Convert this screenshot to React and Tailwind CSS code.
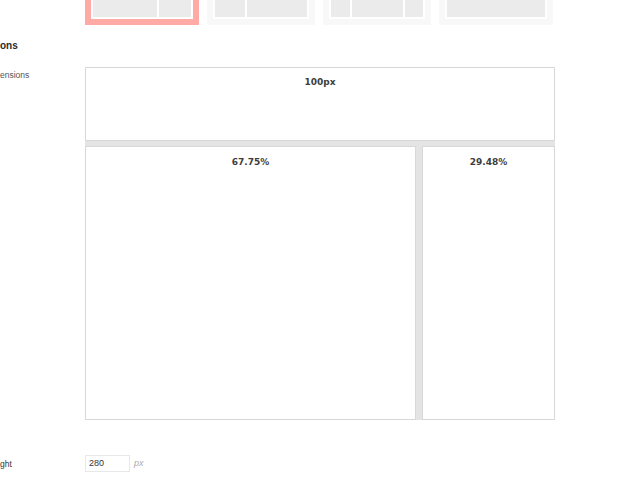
import React from "react";

function Thumb({ selected, cols, width }) {
  return (
    <div
      className={
        "shrink-0 border-[6px] p-[2px] bg-white " +
        (selected ? "border-[#ffaaa5]" : "border-[#f8f8f8]")
      }
      style={{ width }}
    >
      <div className="flex gap-[2px] h-[37px]">
        {cols.map((c, i) => (
          <div key={i} className="bg-[#ebebeb]" style={{ flexGrow: c, flexBasis: 0 }} />
        ))}
      </div>
    </div>
  );
}

export default function App() {
  return (
    <div
      className="w-[619px] h-[480px] overflow-hidden bg-white relative"
      style={{ fontFamily: '"Liberation Sans", Arial, sans-serif' }}
    >
      {/* template thumbnails */}
      <div className="flex gap-2 pl-[85px] -mt-[28px]">
        <Thumb selected cols={[63, 32]} width={114} />
        <Thumb cols={[31, 63]} width={108} />
        <Thumb cols={[20, 53, 19]} width={108} />
        <Thumb cols={[1]} width={114} />
      </div>

      {/* section heading */}
      <div className="mt-[15px] text-[10px] font-bold text-[#2a2a2a] leading-[12px]">ons</div>

      {/* column dimensions */}
      <div className="flex mt-[15px]">
        <div className="w-[85px] shrink-0 pt-[3px] text-[8.5px] text-[#555] leading-[10px]">ensions</div>
        <div className="w-[470px] flex flex-col">
          <div
            className="h-[74px] border border-[#d8d8d8] flex justify-center pt-[9px] text-[9px] font-bold text-[#3d3d3d] leading-[11px]"
            style={{ fontFamily: '"DejaVu Sans", Verdana, sans-serif' }}
          >
            100px
          </div>
          <div className="h-[5px] bg-[#e4e4e4]" />
          <div className="flex h-[274px]">
            <div
              className="w-[331px] border border-[#d8d8d8] flex justify-center pt-[10px] text-[9px] font-bold text-[#3d3d3d] leading-[11px]"
              style={{ fontFamily: '"DejaVu Sans", Verdana, sans-serif' }}
            >
              67.75%
            </div>
            <div className="w-[6px] bg-[#e4e4e4]" />
            <div
              className="flex-1 border border-[#d8d8d8] flex justify-center pt-[10px] text-[9px] font-bold text-[#3d3d3d] leading-[11px]"
              style={{ fontFamily: '"DejaVu Sans", Verdana, sans-serif' }}
            >
              29.48%
            </div>
          </div>
        </div>
      </div>

      {/* height */}
      <div className="flex items-center mt-[35px]">
        <div className="w-[85px] shrink-0 text-[8.5px] text-[#333] leading-[10px]">ght</div>
        <div className="w-[45px] h-[17px] border border-[#e8e8e8] flex items-center pl-[3px] text-[9px] text-[#333]">
          280
        </div>
        <span className="ml-[4px] text-[9px] italic text-[#aaa]">px</span>
      </div>
    </div>
  );
}
